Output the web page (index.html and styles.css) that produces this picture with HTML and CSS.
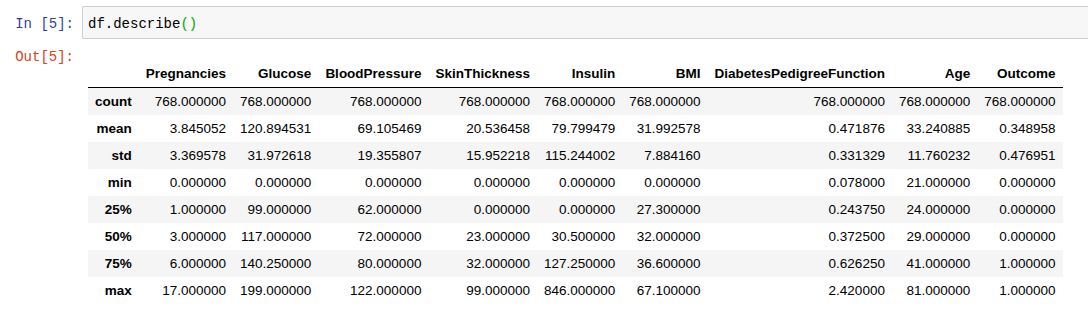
FILE: index.html
```html
<!DOCTYPE html>
<html>
<head>
<meta charset="utf-8">
<link rel="stylesheet" href="styles.css">
</head>
<body>
<div class="cell">
  <div class="input-row">
    <div class="prompt in-prompt">In&nbsp;[5]:</div>
    <div class="input-area"><span class="code">df.describe<span class="bracket">()</span></span></div>
  </div>
  <div class="output-row">
    <div class="prompt out-prompt">Out[5]:</div>
    <div class="output-area">
      <table class="dataframe">
        <thead>
          <tr><th></th><th>Pregnancies</th><th>Glucose</th><th>BloodPressure</th><th>SkinThickness</th><th>Insulin</th><th>BMI</th><th>DiabetesPedigreeFunction</th><th>Age</th><th>Outcome</th></tr>
        </thead>
        <tbody>
          <tr><th>count</th><td>768.000000</td><td>768.000000</td><td>768.000000</td><td>768.000000</td><td>768.000000</td><td>768.000000</td><td>768.000000</td><td>768.000000</td><td>768.000000</td></tr>
          <tr><th>mean</th><td>3.845052</td><td>120.894531</td><td>69.105469</td><td>20.536458</td><td>79.799479</td><td>31.992578</td><td>0.471876</td><td>33.240885</td><td>0.348958</td></tr>
          <tr><th>std</th><td>3.369578</td><td>31.972618</td><td>19.355807</td><td>15.952218</td><td>115.244002</td><td>7.884160</td><td>0.331329</td><td>11.760232</td><td>0.476951</td></tr>
          <tr><th>min</th><td>0.000000</td><td>0.000000</td><td>0.000000</td><td>0.000000</td><td>0.000000</td><td>0.000000</td><td>0.078000</td><td>21.000000</td><td>0.000000</td></tr>
          <tr><th>25%</th><td>1.000000</td><td>99.000000</td><td>62.000000</td><td>0.000000</td><td>0.000000</td><td>27.300000</td><td>0.243750</td><td>24.000000</td><td>0.000000</td></tr>
          <tr><th>50%</th><td>3.000000</td><td>117.000000</td><td>72.000000</td><td>23.000000</td><td>30.500000</td><td>32.000000</td><td>0.372500</td><td>29.000000</td><td>0.000000</td></tr>
          <tr><th>75%</th><td>6.000000</td><td>140.250000</td><td>80.000000</td><td>32.000000</td><td>127.250000</td><td>36.600000</td><td>0.626250</td><td>41.000000</td><td>1.000000</td></tr>
          <tr><th>max</th><td>17.000000</td><td>199.000000</td><td>122.000000</td><td>99.000000</td><td>846.000000</td><td>67.100000</td><td>2.420000</td><td>81.000000</td><td>1.000000</td></tr>
        </tbody>
      </table>
    </div>
  </div>
</div>
</body>
</html>
```
FILE: styles.css
```css
html, body {
  margin: 0;
  padding: 0;
  background: #ffffff;
  overflow: hidden;
}

.cell {
  padding-top: 6px;
}

.input-row {
  display: flex;
  align-items: flex-start;
}

.prompt {
  width: 82px;
  flex: 0 0 82px;
  box-sizing: border-box;
  padding-right: 8px;
  text-align: right;
  font-family: "Liberation Mono", "DejaVu Sans Mono", monospace;
  font-size: 14px;
  line-height: 17px;
  white-space: nowrap;
}

.in-prompt {
  color: #303f9f;
  padding-top: 10px;
}

.out-prompt {
  color: #d84315;
}

.input-area {
  flex: 1;
  height: 33px;
  box-sizing: border-box;
  background: #f7f7f7;
  border: 1px solid #cfcfcf;
  border-right: none;
  border-radius: 2px 0 0 2px;
  padding: 9px 0 5px 5px;
  font-family: "Liberation Mono", "DejaVu Sans Mono", monospace;
  font-size: 14px;
  line-height: 17px;
  color: #000000;
}

.bracket {
  color: #00aa00;
}

.output-row {
  display: flex;
  align-items: flex-start;
  margin-top: 10px;
}

.output-area {
  padding-left: 6px;
  padding-top: 11px;
}

.dataframe {
  border-collapse: collapse;
  border-spacing: 0;
  font-family: "Liberation Sans", Arial, sans-serif;
  font-size: 13.5px;
  color: #000000;
}

.dataframe th,
.dataframe td {
  padding: 7px 7px;
  line-height: 13px;
  text-align: right;
  vertical-align: middle;
  white-space: nowrap;
}

.dataframe th {
  font-weight: bold;
}

.dataframe thead th {
  border-bottom: 1px solid #000000;
}

.dataframe tbody tr:nth-child(odd) {
  background: #f5f5f5;
}
```
